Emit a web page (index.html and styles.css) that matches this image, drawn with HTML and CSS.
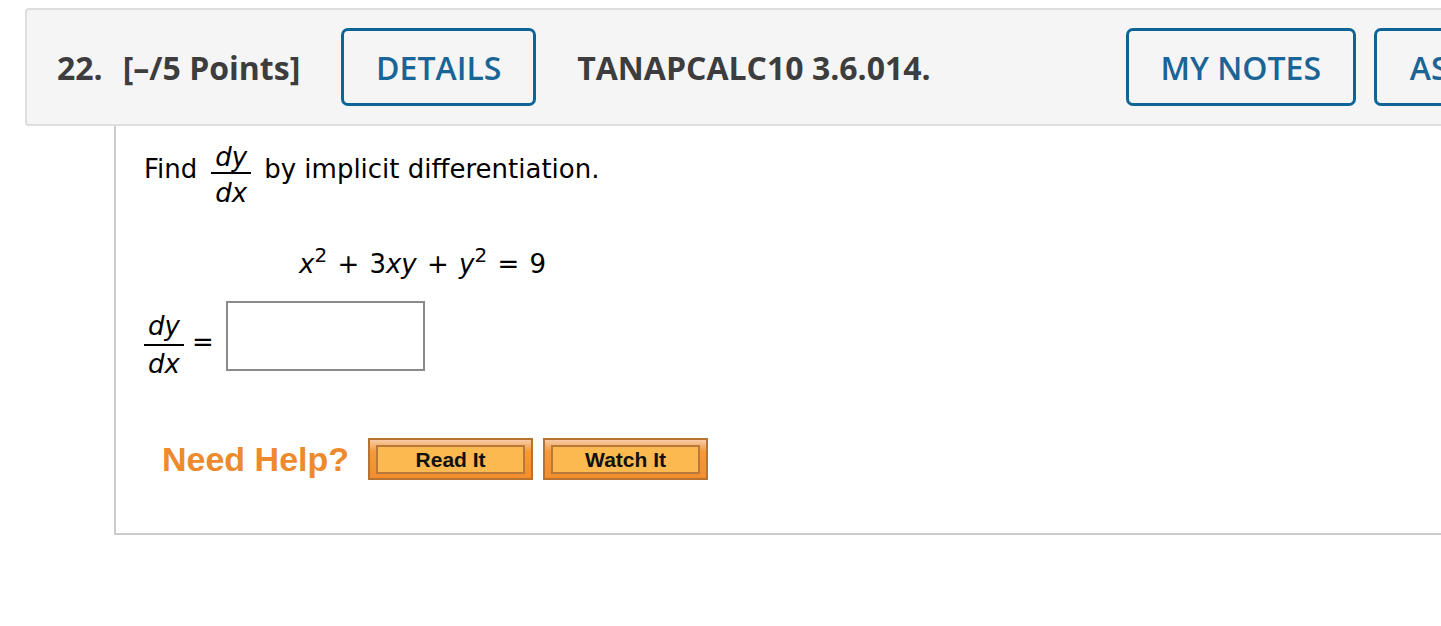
FILE: index.html
```html
<!DOCTYPE html>
<html>
<head>
<meta charset="utf-8">
<link rel="stylesheet" href="styles.css">
</head>
<body>
<div class="page">
  <div class="qhead">
    <span class="qnum">22.</span>
    <span class="qpts">[–/5 Points]</span>
    <span class="btn btn-details">DETAILS</span>
    <span class="qid">TANAPCALC10 3.6.014.</span>
    <span class="btn btn-notes">MY NOTES</span>
    <span class="btn btn-ask">ASK YOUR TEACHER</span>
  </div>
  <div class="qbody">
    <div class="prompt">
      <span class="t">Find</span>
      <span class="frac"><span class="num">dy</span><span class="den">dx</span></span>
      <span class="t">by implicit differentiation.</span>
    </div>
    <p class="eq"><i>x</i><sup>2</sup> + 3<i>xy</i> + <i>y</i><sup>2</sup> = 9</p>
    <div class="answer">
      <span class="frac frac-ans"><span class="num">dy</span><span class="den">dx</span></span>
      <span class="eqsign">=</span>
      <span class="box"></span>
    </div>
    <div class="help">
      <span class="help-label">Need Help?</span>
      <span class="obtn"><span class="obtn-in">Read It</span></span>
      <span class="obtn"><span class="obtn-in">Watch It</span></span>
    </div>
  </div>
</div>
</body>
</html>
```
FILE: styles.css
```css
html, body {
  margin: 0;
  padding: 0;
  background: #fff;
  overflow: hidden;
}
.page {
  padding: 8px 0 0 25px;
}
.qhead {
  display: flex;
  align-items: center;
  width: 1800px;
  box-sizing: border-box;
  height: 118px;
  padding: 0 0 0 30px;
  background: #f5f5f5;
  border: 2px solid #dedede;
  border-radius: 4px;
  font-family: "Open Sans", sans-serif;
  font-weight: 700;
  font-size: 32px;
  color: #3d3d3d;
  white-space: nowrap;
}
.qnum {
  margin-right: 20px;
}
.qpts {
  margin-right: 41px;
}
.btn {
  display: inline-flex;
  align-items: center;
  justify-content: center;
  box-sizing: border-box;
  height: 78px;
  padding: 0 33px;
  border: 3px solid #0f6496;
  border-radius: 7px;
  color: #1a6496;
  font-weight: 600;
}
.btn-details {
  width: 195px;
  padding: 0;
}
.qid {
  margin-left: 41px;
}
.btn-notes {
  margin-left: 195px;
  width: 230px;
  padding: 0;
}
.btn-ask {
  margin-left: 18px;
}
.qbody {
  margin-left: 89px;
  height: 409px;
  box-sizing: border-box;
  border-left: 2px solid #cccccc;
  border-bottom: 2px solid #cccccc;
  padding: 16px 0 0 28px;
  font-family: "DejaVu Sans", Verdana, sans-serif;
  font-size: 26px;
  color: #000;
}
.prompt {
  display: flex;
  align-items: flex-start;
  white-space: nowrap;
}
.prompt .t {
  margin-top: 12px;
  line-height: 30px;
}
.frac {
  display: inline-flex;
  flex-direction: column;
  align-items: center;
  font-style: italic;
  margin: 1px 13px 0 14px;
  line-height: 28px;
}
.frac .num {
  padding: 0 4px 1px;
  border-bottom: 2px solid #000;
}
.frac .den {
  padding: 5px 4px 0;
}
.eq {
  margin: 42px 0 0 155px;
  line-height: 30px;
  word-spacing: 2px;
}
.eq sup {
  font-size: 20px;
  line-height: 0;
  vertical-align: 11px;
}
.answer {
  display: flex;
  align-items: flex-start;
  margin-top: 22px;
}
.frac-ans {
  margin: 11px 0 0;
}
.frac-ans .num {
  padding-bottom: 4px;
}
.frac-ans .den {
  padding-top: 4px;
}
.eqsign {
  margin: 26px 12px 0 8px;
}
.box {
  width: 199px;
  height: 70px;
  box-sizing: border-box;
  border: 2px solid #8a8a8a;
  background: #fff;
}
.help {
  display: flex;
  align-items: center;
  margin-top: 60px;
  margin-left: 18px;
}
.help-label {
  font-family: "Liberation Sans", Arial, sans-serif;
  font-weight: 700;
  font-size: 34px;
  color: #ee8a2e;
  margin-right: 19px;
}
.obtn {
  display: inline-flex;
  box-sizing: border-box;
  width: 165px;
  height: 42px;
  padding: 5px 6px 4px 6px;
  margin-right: 10px;
  border: 2px solid #b87330;
  background: linear-gradient(#f6cba6 0%, #f59a3a 30%, #f28e2e 100%);
}
.obtn-in {
  flex: 1;
  display: flex;
  align-items: center;
  justify-content: center;
  border: 2px solid #b9793a;
  background: #fbb94f;
  font-family: "Liberation Sans", Arial, sans-serif;
  font-weight: 700;
  font-size: 21px;
  color: #111;
}
```
